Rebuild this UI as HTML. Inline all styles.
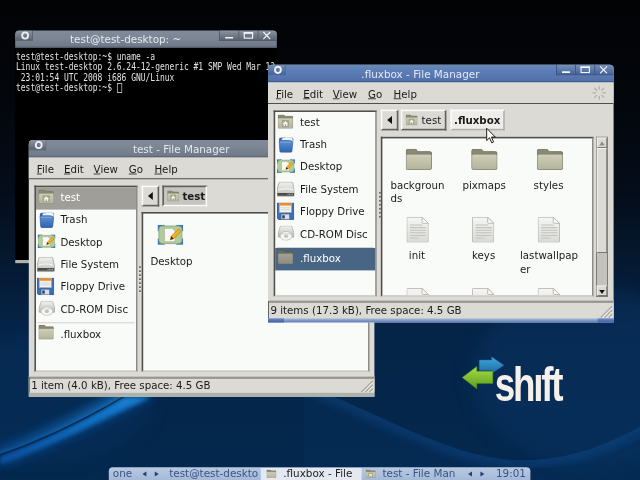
<!DOCTYPE html>
<html><head><meta charset="utf-8"><title>desktop</title>
<style>
html,body{margin:0;padding:0;width:640px;height:480px;overflow:hidden;background:#03101f}
#root{position:absolute;left:0;top:0;width:800px;height:600px;transform:scale(.8);transform-origin:0 0;overflow:hidden;filter:blur(.45px);
 font-family:"DejaVu Sans","Liberation Sans",sans-serif;font-size:12.800px;color:#1a1a1a;
 background:linear-gradient(180deg,#020305 0%,#03060b 20%,#040d1a 40%,#051931 55%,#052447 68%,#04284e 100%)}
.abs{position:absolute}
.win{position:absolute;background:#dcdad5}
.tb{position:absolute;left:0;top:0;right:0;height:22px;box-sizing:border-box;padding:0 72px 0 21px;border-radius:5px 5px 0 0;text-align:center;font-size:13px;line-height:24px;white-space:nowrap;overflow:hidden}
.tb.un{background:linear-gradient(180deg,#818b9a 0%,#7b8594 45%,#707a8a 88%,#4a5362 100%);color:#e3e8f0}
.tb.fo{background:linear-gradient(180deg,#688ab9 0%,#5d7eb6 35%,#5877b1 65%,#536fa9 90%,#30467a 100%);color:#e4e9f4}
.tb i{position:absolute;top:0;width:24px;height:12.500px;font-style:normal;box-sizing:border-box}
.tb.un i{background:linear-gradient(180deg,#8c95a2,#5b636f);border:0 solid #4b525f;border-width:0 0 1px 1px}
.tb.fo i{background:linear-gradient(180deg,#7391bc,#496394);border:0 solid #384f80;border-width:0 0 1px 1px}
.tb i.l{left:0;width:22px;border-radius:5px 0 0 0;border-width:0 1px 1px 0 !important}
.tb i.r{}
.tb i.r:last-child{border-radius:0 5px 0 0}
.tb svg{position:absolute;left:0;top:0}
.menu{position:absolute;left:0;right:0;top:22px;height:26px;background:#dcdad5;border-bottom:1.800px solid #2c2c2a}
.menu span{position:absolute;top:7px}
.pane{position:absolute;background:#f8fbf8;border:2px solid #4e4e4a;border-right-color:#8e8c86;border-bottom-color:#c8c6c0;box-sizing:border-box}
.row{position:absolute;left:0;right:0;height:28px}
.row span{position:absolute;left:31px;top:5.500px;white-space:nowrap}

.btn{position:absolute;box-sizing:border-box;border:2px solid;border-color:#fbfaf8 #62605c #62605c #fbfaf8;background:#dcdad5}
.btn.on{border-color:#62605c #fbfaf8 #fbfaf8 #62605c;background:#c6c4bf;font-weight:bold}
.btn.cur{border-color:#fbfaf8 #b0aea8 #b0aea8 #fbfaf8;background:#eeedea;font-weight:bold}
.btn span{position:absolute;top:4px;white-space:nowrap}

.stat{position:absolute;left:0;right:0;height:20px;border-top:1.500px solid #46443f;border-left:1.500px solid #46443f;box-shadow:0 -2px 0 #c4c2bc;background:#dcdad5;white-space:nowrap}
.stat span{position:absolute;left:2px;top:1.500px}
.lbl{position:absolute;white-space:nowrap;line-height:16px}
.hand{position:absolute;left:0;right:0;bottom:0;height:5px}
.term{position:absolute;font-family:"DejaVu Sans Mono","Liberation Mono",monospace;font-size:12.4px;line-height:13px;color:#e2e2e2;white-space:pre;transform:scaleX(.804);transform-origin:0 0}
.bar{position:absolute;left:136px;top:584px;width:527px;height:16px;border-radius:5px 5px 0 0;background:linear-gradient(180deg,#b9c9e1,#a4b9d8);color:#3b5482;font-size:13px;line-height:16px;white-space:nowrap;overflow:hidden}
.bar span{position:absolute;top:0}
</style></head><body>
<div id="root">

<svg width="0" height="0" style="position:absolute">
<defs>
<linearGradient id="gf" x1="0" y1="0" x2="0" y2="1"><stop offset="0" stop-color="#cfcfb9"/><stop offset="1" stop-color="#b4b49c"/></linearGradient>
<linearGradient id="gp" x1="0" y1="0" x2="0" y2="1"><stop offset="0" stop-color="#f6f6f4"/><stop offset="1" stop-color="#d9d9d5"/></linearGradient>
<linearGradient id="gb" x1="0" y1="0" x2="0" y2="1"><stop offset="0" stop-color="#5e93d6"/><stop offset="1" stop-color="#2d62ae"/></linearGradient>
<linearGradient id="gd" x1="0" y1="0" x2="0" y2="1"><stop offset="0" stop-color="#f2f2f0"/><stop offset="1" stop-color="#bcbcb8"/></linearGradient>
<g id="folderg">
 <path d="M1.500 6.500 q0-2 2-2 h8 q1.500 0 2.500 1.500 l1 1.500 h13.500 q2 0 2 2 v2 h-29z" fill="#8a8a74" stroke="#6a6a56"/>
 <rect x="1.500" y="10.500" width="29" height="19" rx="2" fill="url(#gf)" stroke="#7e7e68"/>
</g>
<symbol id="folder" viewBox="1 4 30 26" preserveAspectRatio="none"><use href="#folderg"/></symbol>
<symbol id="home" viewBox="1 4 30 26" preserveAspectRatio="none">
 <use href="#folderg"/>
 <rect x="9" y="14" width="14" height="13" rx="2" fill="#a3a38b"/>
 <path d="M16 16 l5.500 5 h-1.800 v4 h-2.500 v-3 h-2.400 v3 h-2.500 v-4 h-1.800z" fill="#f4f4ee"/>
</symbol>
<symbol id="file" viewBox="3 1 25 30" preserveAspectRatio="none">
 <path d="M4.500 1.500 h16 l7 7 v21 q0 1-1 1 h-22 q-1 0-1-1 v-27 q0-1 1-1z" fill="url(#gp)" stroke="#b4b4b0"/>
 <path d="M20.500 1.500 v6 q0 1 1 1 h6z" fill="#fafaf8" stroke="#b4b4b0"/>
 <path d="M7 10.500h14M7 13.500h18M7 16.500h18M7 19.500h18M7 22.500h18M7 25.500h10" stroke="#c2c2be" stroke-width="1.200"/>
</symbol>
<symbol id="trash" viewBox="3 3 26 27.500" preserveAspectRatio="none">
 <path d="M4.500 8 q-.5-3 3-3 h17 q3.500 0 3 3 l-1 4 h-21z" fill="#2f5fa8" stroke="#234f94"/>
 <path d="M8 9 q1-5 6-4 q2-3 6-1 q4-2 7 3 q1 4-2 7 q0-4-4-5z" fill="#f4f7fb" stroke="#a9bfdc" stroke-width=".7"/>
 <path d="M4 10 h20 q2 0 3 3 l-1.500 15 q-.2 2-2 2 h-16 q-1.800 0-2-2z" fill="url(#gb)" stroke="#2353a0"/>
 <path d="M5.500 12 h18.500" stroke="#8ab4ea" stroke-width="1.200"/>
</symbol>
<symbol id="desk" viewBox="1 3 30 26" preserveAspectRatio="none">
 <path d="M1 3 h8 l-8 8z M31 3 v8 l-8-8z M1 29 v-8 l8 8z M31 29 h-8 l8-8z" fill="#3f74c4" stroke="#3f74c4" stroke-width="1.500" stroke-linejoin="round"/>
 <rect x="2.500" y="4.500" width="27" height="23" rx="5" fill="#b1cc99" stroke="#86a86e"/>
 <path d="M9 7.500 h9 l3.500 3.500 v14 h-12.500z" fill="#f8f8f5" stroke="#a4a49a" stroke-width=".8"/>
 <path d="M25.500 8.500 l3 3 -8.500 9.500 -4 1.500 1-4.500z" fill="#f2b21d" stroke="#b87a08" stroke-width=".8"/>
 <path d="M16 22.500 l1-4.500 3 3z" fill="#3a2a14"/>
</symbol>
<symbol id="hdd" viewBox="1 5.500 30 23.500" preserveAspectRatio="none">
 <path d="M7 6 h18 q2 0 2.600 2 l3 11 v7.500 q0 2-2 2 h-25.200 q-2 0-2-2 v-7.500 l3-11 q.6-2 2.600-2z" fill="url(#gd)" stroke="#8a8a86"/>
 <path d="M4 18.500 q12-4 24 0" stroke="#fff" stroke-width="1.600" fill="none" opacity=".8"/>
 <rect x="2" y="23" width="28" height="4.200" rx="1" fill="#4a4a48"/>
 <path d="M19 25 h9" stroke="#c9c9c5" stroke-width="1.500" stroke-dasharray="1.500 1"/>
</symbol>
<symbol id="floppy" viewBox="2 2.500 28.500 28" preserveAspectRatio="none">
 <path d="M3 3 h26 q1 0 1 1 v25 q0 1-1 1 h-24 l-3-3 v-23 q0-1 1-1z" fill="#3c6eb9" stroke="#214b8c"/>
 <rect x="6" y="3.500" width="20" height="15" fill="#f2f2ee" stroke="#9ab"/>
 <rect x="6" y="3.500" width="20" height="4" fill="#f08a24"/>
 <path d="M8 11h16M8 14h16" stroke="#c8c8c4"/>
 <rect x="9" y="21" width="14" height="9" fill="#d9dde4" stroke="#56627a"/>
 <rect x="11" y="23" width="4" height="5" fill="#2f3d57"/>
</symbol>
<symbol id="cd" viewBox="1 3.500 30 25.500" preserveAspectRatio="none">
 <path d="M8 4 h16 q2 0 2.600 2 l3.900 12 v3 q0 2-2 2 h-25 q-2 0-2-2 v-3 l3.900-12 q.6-2 2.600-2z" fill="url(#gd)" stroke="#9a9a96"/>
 <ellipse cx="16" cy="21" rx="10.500" ry="7.500" fill="#f6f6f5" stroke="#a9a9a5"/>
 <ellipse cx="16" cy="21.500" rx="3.200" ry="2.200" fill="#c4c4c1" stroke="#a0a09c" stroke-width=".6"/>
 <path d="M3 17.500 h26" stroke="#b4b4b0" stroke-width="1"/>
</symbol>
</defs></svg>

<svg class="abs" width="800" height="600" style="left:0;top:0">
<defs>
<filter id="b6"><feGaussianBlur stdDeviation="5"/></filter>
<filter id="b10"><feGaussianBlur stdDeviation="12"/></filter>
<filter id="b3"><feGaussianBlur stdDeviation="2.500"/></filter>
<clipPath id="cA"><path d="M0 400 L170 400 L170 496 L153 496 C110 521 50 551 0 567.500z"/></clipPath>
<clipPath id="cB"><path d="M155.500 496 C112 522.500 51 553 0 570 L0 600 L300 600 L300 480 z"/></clipPath>
<linearGradient id="fr" x1="0" y1="0" x2="1" y2="0"><stop offset="0" stop-color="#0a50a0"/><stop offset=".5" stop-color="#1272c8"/><stop offset="1" stop-color="#1f8fe6"/></linearGradient>
</defs>
<ellipse cx="40" cy="500" rx="150" ry="80" fill="#0a3f7a" opacity=".2" filter="url(#b10)"/><ellipse cx="740" cy="470" rx="150" ry="110" fill="#0b3d76" opacity=".3" filter="url(#b10)"/>
<g clip-path="url(#cA)"><path d="M175 483 C110 521 50 551 -10 570" fill="none" stroke="url(#fr)" stroke-width="19" opacity=".52" filter="url(#b6)"/>
<path d="M153 496 C110 521 50 551 0 567.500" fill="none" stroke="#2a97ea" stroke-width="2.500" opacity=".55" filter="url(#b3)"/></g>
<g clip-path="url(#cB)"><path d="M155.500 496 C112 522.500 51 553 0 570 L0 581 C60 559 135 523 189 496z" fill="url(#fr)" opacity=".95" filter="url(#b3)"/>
<path d="M189 496 C135 523 60 559 0 581" fill="none" stroke="#0d5cad" stroke-width="8" opacity=".45" filter="url(#b6)"/></g>
<clipPath id="cC"><path d="M380 480 C470 515 560 570 640 575 C710 578 760 555 810 528 L810 610 L380 610z"/></clipPath>
<g clip-path="url(#cC)"><rect x="380" y="470" width="430" height="140" fill="#0b3c70" opacity=".18"/><path d="M380 480 C470 515 560 570 640 575 C710 578 760 555 810 528" fill="none" stroke="#1560b0" stroke-width="20" opacity=".26" filter="url(#b6)"/></g>
</svg>
<div class="win" style="left:19px;top:38px;width:327px;height:291px;background:#000;border-radius:5px 5px 0 0">
<div class="tb un"><i class="l"></i>test@test-desktop: ~<i class="r" style="right:48px"></i><i class="r" style="right:24px"></i><i class="r" style="right:0"></i>
<svg width="100%" height="22" style="width:100%"><g fill="none" stroke="#eef1f6" stroke-width="2.300"><ellipse cx="12.400" cy="6.300" rx="3.700" ry="3.900"/></g></svg>
<svg width="72" height="14" style="left:auto;right:0"><g fill="none" stroke="#f4f6fa" stroke-width="1.400"><path d="M7.500 9.200h10" stroke-width="2"/><rect x="31.300" y="2.900" width="10.400" height="6.800"/><path d="M30.600 3.200h11.800" stroke-width="1.900"/><path d="M55.200 2l8.600 8.800M63.800 2l-8.600 8.800"/></g></svg></div>
<div class="term" style="left:1px;top:25.500px">test@test-desktop:~$ uname -a
Linux test-desktop 2.6.24-12-generic #1 SMP Wed Mar 12
 23:01:54 UTC 2008 i686 GNU/Linux
test@test-desktop:~$ <span style="display:inline-block;width:6px;height:10px;border:1px solid #e2e2e2;vertical-align:-2px"></span></div>
<div class="hand" style="height:4px;background:#aeb2ac"></div>
</div>
<div class="win" style="left:36px;top:175px;width:432px;height:321px;border-radius:5px 5px 0 0">
<div class="tb un"><i class="l"></i>test - File Manager<i class="r" style="right:48px"></i><i class="r" style="right:24px"></i><i class="r" style="right:0"></i>
<svg width="100%" height="22" style="width:100%"><g fill="none" stroke="#eef1f6" stroke-width="2.300"><ellipse cx="12.400" cy="6.300" rx="3.700" ry="3.900"/></g></svg>
<svg width="72" height="14" style="left:auto;right:0"><g fill="none" stroke="#f4f6fa" stroke-width="1.400"><path d="M7.500 9.200h10" stroke-width="2"/><rect x="31.300" y="2.900" width="10.400" height="6.800"/><path d="M30.600 3.200h11.800" stroke-width="1.900"/><path d="M55.200 2l8.600 8.800M63.800 2l-8.600 8.800"/></g></svg></div>
<div class="menu"><span style="left:10px"><u>F</u>ile</span><span style="left:44px"><u>E</u>dit</span><span style="left:81px"><u>V</u>iew</span><span style="left:125px"><u>G</u>o</span><span style="left:157px"><u>H</u>elp</span></div>
<div class="pane" style="left:6.5px;top:56.5px;width:129px;height:233.5px"><div class="row" style="top:0px;background:#a09e98;color:#fff;"><svg class="abs" width="19.6" height="18" style="left:3.1px;top:3.5px"><use href="#home" width="19.6" height="18"/></svg><span>test</span></div><div class="row" style="top:28px;"><svg class="abs" width="19.5" height="20" style="left:4px;top:3px"><use href="#trash" width="19.5" height="20"/></svg><span>Trash</span></div><div class="row" style="top:56px;"><svg class="abs" width="22.6" height="17.1" style="left:2.4px;top:3.9px"><use href="#desk" width="22.6" height="17.1"/></svg><span>Desktop</span></div><div class="row" style="top:84px;"><svg class="abs" width="22.5" height="19" style="left:1.75px;top:3px"><use href="#hdd" width="22.5" height="19"/></svg><span>File System</span></div><div class="row" style="top:112px;"><svg class="abs" width="21.75" height="22" style="left:1.75px;top:1.5px"><use href="#floppy" width="21.75" height="22"/></svg><span>Floppy Drive</span></div><div class="row" style="top:140px;"><svg class="abs" width="21.25" height="18.8" style="left:3px;top:2.5px"><use href="#cd" width="21.25" height="18.8"/></svg><span>CD-ROM Disc</span></div><div class="row" style="top:170.5px;"><svg class="abs" width="19.7" height="18.5" style="left:3px;top:2px"><use href="#folder" width="19.7" height="18.5"/></svg><span>.fluxbox</span></div><div class="abs" style="left:2px;right:2px;top:169px;height:1px;background:#c9c7c1"></div></div>
<div class="abs" style="left:138px;top:158px;width:2px;height:2px;background:#55534f;box-shadow:1px 1px 0 #fbfaf8"></div><div class="abs" style="left:138px;top:163px;width:2px;height:2px;background:#55534f;box-shadow:1px 1px 0 #fbfaf8"></div><div class="abs" style="left:138px;top:168px;width:2px;height:2px;background:#55534f;box-shadow:1px 1px 0 #fbfaf8"></div><div class="abs" style="left:138px;top:173px;width:2px;height:2px;background:#55534f;box-shadow:1px 1px 0 #fbfaf8"></div><div class="abs" style="left:138px;top:178px;width:2px;height:2px;background:#55534f;box-shadow:1px 1px 0 #fbfaf8"></div><div class="abs" style="left:138px;top:183px;width:2px;height:2px;background:#55534f;box-shadow:1px 1px 0 #fbfaf8"></div><div class="abs" style="left:138px;top:188px;width:2px;height:2px;background:#55534f;box-shadow:1px 1px 0 #fbfaf8"></div>
<div class="btn" style="left:141px;top:57px;width:22px;height:26px"><svg width="18" height="22" style="left:0;top:0"><path d="M12 6v10l-6-5z" fill="#111"/></svg></div>
<div class="btn on" style="left:167px;top:57px;width:56px;height:26px"><svg class="abs" width="15" height="14" style="left:4px;top:4px"><use href="#home" width="15" height="14"/></svg><span style="left:23px">test</span></div>
<div class="pane" style="left:141px;top:90px;width:285px;height:200px">
<svg class="abs" width="32" height="25" style="left:18px;top:14px"><use href="#desk" width="32" height="25"/></svg>
<div class="lbl" style="left:9px;top:51.500px">Desktop</div>
</div>
<div class="stat" style="top:296.500px;height:18px"><span>1 item (4.0 kB), Free space: 4.5 GB</span></div>
<svg class="abs" width="18" height="18" style="right:1px;bottom:5px"><path d="M17 3L3 17M17 8L8 17M17 13L13 17" stroke="#9a9892" stroke-width="1.500"/><path d="M17 4.500L4.500 17M17 9.500L9.500 17M17 14.500L14.500 17" stroke="#fbfaf8" stroke-width="1"/></svg>
<div class="hand" style="background:#aeb2ac"></div>
</div>
<div class="win" style="left:335px;top:81px;width:432px;height:322px;border-radius:5px 5px 0 0">
<div class="tb fo"><i class="l"></i>.fluxbox - File Manager<i class="r" style="right:48px"></i><i class="r" style="right:24px"></i><i class="r" style="right:0"></i>
<svg width="100%" height="22" style="width:100%"><g fill="none" stroke="#eef1f6" stroke-width="2.300"><ellipse cx="12.400" cy="6.300" rx="3.700" ry="3.900"/></g></svg>
<svg width="72" height="14" style="left:auto;right:0"><g fill="none" stroke="#f4f6fa" stroke-width="1.400"><path d="M7.500 9.200h10" stroke-width="2"/><rect x="31.300" y="2.900" width="10.400" height="6.800"/><path d="M30.600 3.200h11.800" stroke-width="1.900"/><path d="M55.200 2l8.600 8.800M63.800 2l-8.600 8.800"/></g></svg></div>
<div class="menu"><span style="left:10px"><u>F</u>ile</span><span style="left:44px"><u>E</u>dit</span><span style="left:81px"><u>V</u>iew</span><span style="left:125px"><u>G</u>o</span><span style="left:157px"><u>H</u>elp</span></div>
<svg class="abs" width="20" height="20" style="left:404px;top:25px"><g stroke="#b2b0aa" stroke-width="1.600" stroke-linecap="round"><path d="M10 2v3.500M10 14.500v3.500M2 10h3.500M14.500 10h3.500M4.300 4.300l2.500 2.500M13.200 13.200l2.500 2.500M4.300 15.700l2.500-2.500M13.200 6.800l2.500-2.500"/></g></svg>
<div class="pane" style="left:7px;top:56.5px;width:129px;height:233.5px"><div class="row" style="top:0px;"><svg class="abs" width="19.6" height="18" style="left:3.1px;top:3.5px"><use href="#home" width="19.6" height="18"/></svg><span>test</span></div><div class="row" style="top:28px;"><svg class="abs" width="19.5" height="20" style="left:4px;top:3px"><use href="#trash" width="19.5" height="20"/></svg><span>Trash</span></div><div class="row" style="top:56px;"><svg class="abs" width="22.6" height="17.1" style="left:2.4px;top:3.9px"><use href="#desk" width="22.6" height="17.1"/></svg><span>Desktop</span></div><div class="row" style="top:84px;"><svg class="abs" width="22.5" height="19" style="left:1.75px;top:3px"><use href="#hdd" width="22.5" height="19"/></svg><span>File System</span></div><div class="row" style="top:112px;"><svg class="abs" width="21.75" height="22" style="left:1.75px;top:1.5px"><use href="#floppy" width="21.75" height="22"/></svg><span>Floppy Drive</span></div><div class="row" style="top:140px;"><svg class="abs" width="21.25" height="18.8" style="left:3px;top:2.5px"><use href="#cd" width="21.25" height="18.8"/></svg><span>CD-ROM Disc</span></div><div class="row" style="top:170.5px;background:#486684;color:#fff;"><svg class="abs" width="19.7" height="18.5" style="filter:brightness(.78) saturate(.7);left:3px;top:2px"><use href="#folder" width="19.7" height="18.5"/></svg><span>.fluxbox</span></div><div class="abs" style="left:2px;right:2px;top:169px;height:1px;background:#c9c7c1"></div></div>
<div class="abs" style="left:139px;top:159px;width:2px;height:2px;background:#55534f;box-shadow:1px 1px 0 #fbfaf8"></div><div class="abs" style="left:139px;top:164px;width:2px;height:2px;background:#55534f;box-shadow:1px 1px 0 #fbfaf8"></div><div class="abs" style="left:139px;top:169px;width:2px;height:2px;background:#55534f;box-shadow:1px 1px 0 #fbfaf8"></div><div class="abs" style="left:139px;top:174px;width:2px;height:2px;background:#55534f;box-shadow:1px 1px 0 #fbfaf8"></div><div class="abs" style="left:139px;top:179px;width:2px;height:2px;background:#55534f;box-shadow:1px 1px 0 #fbfaf8"></div><div class="abs" style="left:139px;top:184px;width:2px;height:2px;background:#55534f;box-shadow:1px 1px 0 #fbfaf8"></div><div class="abs" style="left:139px;top:189px;width:2px;height:2px;background:#55534f;box-shadow:1px 1px 0 #fbfaf8"></div>
<div class="btn" style="left:141px;top:56px;width:22px;height:26px"><svg width="18" height="22" style="left:0;top:0"><path d="M12 6v10l-6-5z" fill="#111"/></svg></div>
<div class="btn" style="left:166px;top:56px;width:57px;height:26px"><svg class="abs" width="15" height="14" style="left:4px;top:4px"><use href="#home" width="15" height="14"/></svg><span style="left:24px">test</span></div>
<div class="btn cur" style="left:228px;top:56px;width:68px;height:26px"><span style="left:2.500px">.fluxbox</span></div>
<div class="pane" style="left:141px;top:90px;width:266px;height:200px;overflow:hidden">
<svg class="abs" width="33" height="26.5" style="left:28.5px;top:13px"><use href="#folder" width="33" height="26.5"/></svg><div class="lbl" style="left:10px;top:51px">backgroun</div><div class="lbl" style="left:10px;top:68px">ds</div>
<svg class="abs" width="33" height="26.5" style="left:110.5px;top:13px"><use href="#folder" width="33" height="26.5"/></svg><div class="lbl" style="left:100px;top:51px">pixmaps</div>
<svg class="abs" width="33" height="26.5" style="left:192.5px;top:13px"><use href="#folder" width="33" height="26.5"/></svg><div class="lbl" style="left:189px;top:51px">styles</div>
<svg class="abs" width="28" height="32.5" style="left:30px;top:97.8px"><use href="#file" width="28" height="32.5"/></svg><div class="lbl" style="left:33px;top:139.3px">init</div>
<svg class="abs" width="28" height="32.5" style="left:112px;top:97.8px"><use href="#file" width="28" height="32.5"/></svg><div class="lbl" style="left:112px;top:139.3px">keys</div>
<svg class="abs" width="28" height="32.5" style="left:194px;top:97.8px"><use href="#file" width="28" height="32.5"/></svg><div class="lbl" style="left:172px;top:139.3px">lastwallpap</div><div class="lbl" style="left:172px;top:156.3px">er</div>
<svg class="abs" width="28" height="32.5" style="left:30px;top:186.5px"><use href="#file" width="28" height="32.5"/></svg>
<svg class="abs" width="28" height="32.5" style="left:112px;top:186.5px"><use href="#file" width="28" height="32.5"/></svg>
<svg class="abs" width="28" height="32.5" style="left:194px;top:186.5px"><use href="#file" width="28" height="32.5"/></svg>
</div>
<div class="abs" style="left:410px;top:90px;width:15px;height:200px;background:#c4c2bd;box-sizing:border-box;border:1px solid #6a6864"></div>
<div class="btn" style="left:411px;top:91px;width:13px;height:13px;border-width:1px"><svg width="11" height="11" style="left:0;top:0"><path d="M5.500 3l3.500 5h-7z" fill="#8e8c86"/></svg></div>
<div class="btn" style="left:411px;top:104px;width:13px;height:131px;border-width:1px"></div>
<div class="btn" style="left:411px;top:276px;width:13px;height:13px;border-width:1px"><svg width="11" height="11" style="left:0;top:0"><path d="M5.500 8.500l3.500-5h-7z" fill="#111"/></svg></div>
<div class="stat" style="top:296px"><span>9 items (17.3 kB), Free space: 4.5 GB</span></div>
<svg class="abs" width="18" height="18" style="right:1px;bottom:5px"><path d="M17 3L3 17M17 8L8 17M17 13L13 17" stroke="#9a9892" stroke-width="1.500"/><path d="M17 4.500L4.500 17M17 9.500L9.500 17M17 14.500L14.500 17" stroke="#fbfaf8" stroke-width="1"/></svg>
<div class="hand" style="background:linear-gradient(180deg,#a9bbdc,#5a7ab8)"></div><div class="hand" style="right:auto;width:20px;background:linear-gradient(180deg,#6f8cc4,#3f5fa2)"></div><div class="hand" style="left:auto;width:20px;background:linear-gradient(180deg,#6f8cc4,#3f5fa2)"></div>
<svg class="abs" width="16" height="24" style="left:271.500px;top:78px"><path transform="scale(.9)" d="M1.500 1.500v17l4-3.800 3 7 2.600-1.200-3-6.800h5.400z" fill="#fff" stroke="#111" stroke-width="1.300"/></svg>
</div>
<svg class="abs" width="150" height="80" style="left:570px;top:438px">
<defs>
<linearGradient id="ga" x1="0" y1="0" x2="0" y2="1"><stop offset="0" stop-color="#40a8d8"/><stop offset="1" stop-color="#1b6aa8"/></linearGradient>
<linearGradient id="gg" x1="0" y1="0" x2="0" y2="1"><stop offset="0" stop-color="#a8dc48"/><stop offset="1" stop-color="#5a9f1c"/></linearGradient>
</defs>
<path d="M29 12 H44.500 V8 L60 18.500 L44.500 29 V25 H29z" fill="url(#ga)" stroke="#1a5f98" stroke-width=".6"/>
<path d="M46 26 H26 v-6 L7.700 34 L26 48 v-6.500 H46z" fill="url(#gg)" stroke="#4f8f1a" stroke-width=".6"/>
<text transform="translate(48.500,63.500) scale(.92,1.200)" x="0" y="0" font-family="Liberation Sans, DejaVu Sans, sans-serif" font-weight="bold" font-size="50" letter-spacing="-3" fill="#f6f0ea">shıft</text>
</svg>
<div class="bar">
<span style="left:5px">one</span>
<svg class="abs" width="40" height="16" style="left:36px;top:0"><path d="M11 5.500v6l-5-3zM21.500 5.500v6l5-3z" fill="#27406e"/></svg>
<span style="left:75.500px">test@test-deskto</span>
<div class="abs" style="left:190px;top:1px;width:126px;height:15px;background:#e3e8f1"></div>
<svg class="abs" width="12.5" height="10.5" style="left:197px;top:3px"><use href="#folder" width="12.5" height="10.5"/></svg>
<span style="left:218px;color:#222">.fluxbox - File</span>
<svg class="abs" width="12.5" height="10.5" style="left:321px;top:3px"><use href="#home" width="12.5" height="10.5"/></svg>
<span style="left:342px">test - File Man</span>
<svg class="abs" width="40" height="16" style="left:443px;top:0"><path d="M11 5.500v6l-5-3zM21.500 5.500v6l5-3z" fill="#27406e"/></svg>
<span style="left:484px">19:01</span>
</div>
</div>
</body></html>
